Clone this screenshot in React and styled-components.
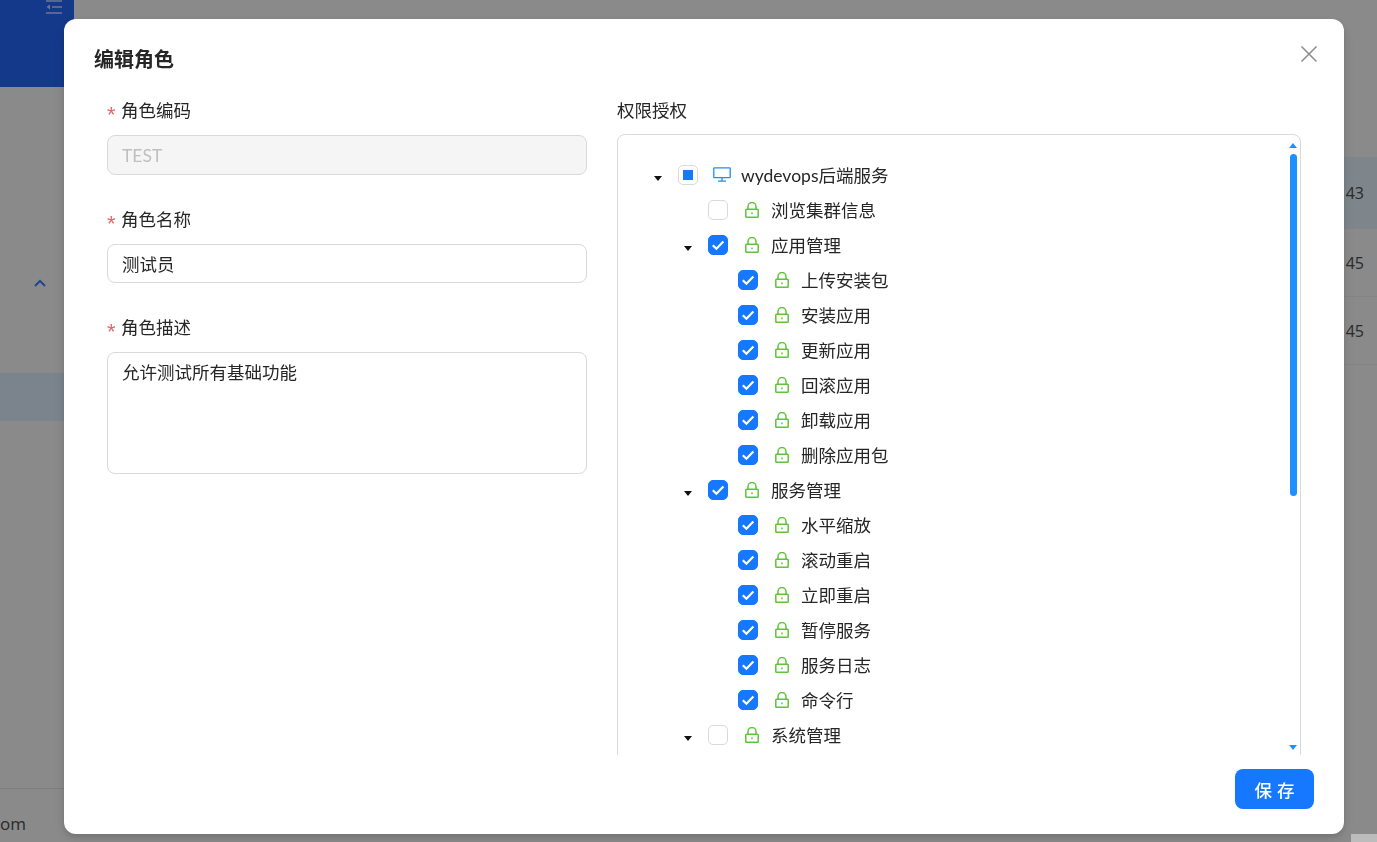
import React from 'react'
import styled, { createGlobalStyle } from 'styled-components'

const FONT = `"Lato", "Noto Sans CJK SC", sans-serif`

const tree = [
  { label: 'wydevops后端服务', depth: 0, caret: true, state: 'half', icon: 'desktop' },
  { label: '浏览集群信息', depth: 1, state: 'off' },
  { label: '应用管理', depth: 1, caret: true, state: 'on' },
  { label: '上传安装包', depth: 2, state: 'on' },
  { label: '安装应用', depth: 2, state: 'on' },
  { label: '更新应用', depth: 2, state: 'on' },
  { label: '回滚应用', depth: 2, state: 'on' },
  { label: '卸载应用', depth: 2, state: 'on' },
  { label: '删除应用包', depth: 2, state: 'on' },
  { label: '服务管理', depth: 1, caret: true, state: 'on' },
  { label: '水平缩放', depth: 2, state: 'on' },
  { label: '滚动重启', depth: 2, state: 'on' },
  { label: '立即重启', depth: 2, state: 'on' },
  { label: '暂停服务', depth: 2, state: 'on' },
  { label: '服务日志', depth: 2, state: 'on' },
  { label: '命令行', depth: 2, state: 'on' },
  { label: '系统管理', depth: 1, caret: true, state: 'off' },
]

const Global = createGlobalStyle`
  html, body {
    margin: 0;
    padding: 0;
    height: 100%;
    overflow: hidden;
    font-family: ${FONT};
    background: #fbfbfb;
  }
  * { box-sizing: border-box; }
`

const Page = styled.div`
  display: flex;
  width: 1377px;
  height: 842px;
  overflow: hidden;
`

const Sidebar = styled.aside`
  width: 74px;
  flex: none;
  display: flex;
  flex-direction: column;
`

const Logo = styled.div`
  height: 87px;
  background: #2568fb;
  display: flex;
  justify-content: flex-end;
  padding-right: 12px;
`

const MenuGroup = styled.div`
  height: 172px;
`

const MenuHead = styled.div`
  height: 48px;
  display: flex;
  align-items: center;
  padding-left: 34px;
`

const MenuItem = styled.div`
  height: 48px;
  margin-top: ${p => p.$gap || 0}px;
  background: ${p => (p.$active ? '#e0efff' : 'transparent')};
`

const SideFoot = styled.div`
  margin-top: auto;
  height: 54px;
  border-top: 1px solid #e4e4e4;
  padding-top: 23px;
  font-family: "Open Sans", sans-serif;
  font-size: 17px;
  line-height: 24px;
  color: #4e4e4e;
`

const Main = styled.main`
  flex: 1;
  padding-top: 157px;
`

const TableRow = styled.div`
  height: ${p => p.$h}px;
  background: ${p => (p.$active ? '#e6f4ff' : 'transparent')};
  border-bottom: 1px solid #f0f0f0;
  display: flex;
  align-items: center;
  justify-content: flex-end;
  padding-right: 13px;
  font-family: "Open Sans", sans-serif;
  font-size: 16px;
  color: #4e4e4e;
`

const Mask = styled.div`
  position: fixed;
  inset: 0;
  background: rgba(0, 0, 0, 0.45);
`

const ScrollStub = styled.div`
  position: fixed;
  left: 1351px;
  top: 834px;
  right: 0;
  bottom: 0;
  background: #bcbcbc;
`

const Modal = styled.div`
  position: fixed;
  left: 64px;
  top: 19px;
  width: 1280px;
  height: 815px;
  background: #fff;
  border-radius: 12px;
  box-shadow: 0 6px 16px rgba(0, 0, 0, 0.08), 0 3px 6px rgba(0, 0, 0, 0.12);
  display: flex;
  flex-direction: column;
`

const ModalHead = styled.div`
  height: 77px;
  padding: 26px 30px 0;
  flex: none;
`

const Title = styled.h2`
  margin: 0;
  font-size: 20px;
  line-height: 28px;
  font-weight: 700;
  color: #262626;
`

const CloseBtn = styled.button`
  position: absolute;
  top: 26px;
  right: 26px;
  width: 18px;
  height: 18px;
  padding: 0;
  border: 0;
  background: none;
  color: #8c8c8c;
  display: flex;
`

const ModalBody = styled.div`
  flex: none;
  height: 659px;
  display: flex;
  padding-left: 43px;
  gap: 30px;
`

const FormCol = styled.div`
  width: 480px;
  flex: none;
`

const Field = styled.div`
  margin-bottom: 30px;
`

const Label = styled.label`
  display: flex;
  align-items: center;
  height: 30px;
  padding-bottom: 3px;
  margin-bottom: ${p => p.$mb || 9}px;
  font-size: 17.5px;
  color: #262626;
  white-space: nowrap;
`

const Star = styled.span`
  width: 14px;
  flex: none;
  margin-top: 10px;
  color: #e2686e;
  font-size: 22px;
  line-height: 22px;
  font-family: "Liberation Sans", sans-serif;
`

const Input = styled.input`
  display: block;
  width: 100%;
  height: ${p => p.$h}px;
  padding: 0 14px;
  border: 1px solid #d9d9d9;
  border-radius: 8px;
  font-family: ${FONT};
  font-size: 17.5px;
  color: #262626;
  outline: none;
  &:disabled {
    background: #f5f5f5;
    color: #bfbfbf;
  }
`

const TextArea = styled.textarea`
  display: block;
  width: 100%;
  height: 122px;
  padding: 6px 14px;
  border: 1px solid #d9d9d9;
  border-radius: 8px;
  font-family: ${FONT};
  font-size: 17.5px;
  line-height: 28px;
  color: #262626;
  outline: none;
  resize: none;
`

const TreeCol = styled.div`
  width: 684px;
  flex: none;
  display: flex;
  flex-direction: column;
`

const TreeClip = styled.div`
  position: relative;
  flex: 1;
  overflow: hidden;
`

const TreeBox = styled.div`
  height: 700px;
  padding: 22px 0 0 30px;
  border: 1px solid #d9d9d9;
  border-radius: 8px;
`

const Row = styled.div`
  display: flex;
  align-items: center;
  height: 35px;
  padding-left: ${p => p.$depth * 30}px;
`

const Switcher = styled.span`
  width: 20px;
  height: 20px;
  flex: none;
  display: flex;
  align-items: center;
  justify-content: center;
  &::after {
    content: '';
    display: ${p => (p.$show ? 'block' : 'none')};
    margin-top: 7px;
    border-left: 4px solid transparent;
    border-right: 4px solid transparent;
    border-top: 5px solid #111;
  }
`

const Check = styled.span`
  width: 20px;
  height: 20px;
  flex: none;
  margin-left: 10px;
  border-radius: 5px;
  border: 1px solid ${p => (p.$state === 'on' ? '#1677ff' : '#d9d9d9')};
  background: ${p => (p.$state === 'on' ? '#1677ff' : '#fff')};
  display: flex;
  align-items: center;
  justify-content: center;
`

const HalfMark = styled.span`
  width: 10px;
  height: 10px;
  background: #1677ff;
`

const IconSlot = styled.span`
  width: 36px;
  margin-left: 6px;
  flex: none;
  display: flex;
  align-items: center;
  justify-content: center;
`

const RowText = styled.span`
  margin-left: 1px;
  font-size: 17.5px;
  color: #262626;
  white-space: nowrap;
`

const ScrollBar = styled.div`
  position: absolute;
  top: 0;
  bottom: 0;
  left: 672px;
  width: 9px;
`

const Arrow = styled.span`
  position: absolute;
  left: 0;
  ${p => (p.$down ? 'bottom: 5px;' : 'top: 9px;')}
  border-left: 4.5px solid transparent;
  border-right: 4.5px solid transparent;
  ${p => (p.$down ? 'border-top' : 'border-bottom')}: 5px solid #1e90ff;
`

const Thumb = styled.span`
  position: absolute;
  left: 1px;
  top: 20px;
  width: 7px;
  height: 342px;
  border-radius: 4px;
  background: #1e90ff;
`

const ModalFoot = styled.div`
  flex: none;
  display: flex;
  justify-content: flex-end;
  padding: 14px 30px 0;
`

const SaveBtn = styled.button`
  width: 79px;
  height: 40px;
  border: 0;
  border-radius: 8px;
  background: #1677ff;
  color: #fff;
  font-family: ${FONT};
  font-size: 17.5px;
  font-weight: 500;
  letter-spacing: 5px;
  padding: 0 0 0 5px;
`

const LockIcon = () => (
  <svg width="14" height="16" viewBox="0 0 14 16" fill="none" stroke="#5fc437" strokeWidth="1.5">
    <rect x="0.8" y="7.2" width="12.4" height="8" rx="0.8" />
    <path d="M3 7V4.5a4 4 0 0 1 8 0V7" />
    <path d="M7 10.5v1.8" />
  </svg>
)

const DesktopIcon = () => (
  <svg width="18" height="15" viewBox="0 0 18 15" fill="none" stroke="#1890ff" strokeWidth="1.3">
    <rect x="0.8" y="0.8" width="16.4" height="9.8" rx="0.6" />
    <path d="M9 10.6v3.4M5 14.2h8" />
  </svg>
)

const CheckMark = () => (
  <svg width="14" height="12" viewBox="0 0 14 12" fill="none" stroke="#fff" strokeWidth="2.2">
    <path d="M1.8 6.2l3.6 3.6L12.4 2.6" />
  </svg>
)

const CloseIcon = () => (
  <svg width="18" height="18" viewBox="0 0 18 18" stroke="currentColor" strokeWidth="1.5">
    <path d="M1.5 1.5l15 15M16.5 1.5l-15 15" />
  </svg>
)

const FoldIcon = () => (
  <svg width="16" height="14" viewBox="0 0 16 14" fill="none" stroke="#c9d8ff" strokeWidth="1.3">
    <path d="M0 1h16M6 7h10M0 13h16" />
    <path d="M4 4.5v5L0.6 7z" fill="#c9d8ff" stroke="none" />
  </svg>
)

const UpChevron = () => (
  <svg width="12" height="8" viewBox="0 0 12 8" fill="none" stroke="#3f7cff" strokeWidth="2">
    <path d="M1 7l5-5 5 5" />
  </svg>
)

const TreeRow = ({ node }) => (
  <Row $depth={node.depth}>
    <Switcher $show={node.caret} />
    <Check $state={node.state}>
      {node.state === 'on' && <CheckMark />}
      {node.state === 'half' && <HalfMark />}
    </Check>
    <IconSlot>{node.icon === 'desktop' ? <DesktopIcon /> : <LockIcon />}</IconSlot>
    <RowText>{node.label}</RowText>
  </Row>
)

export default function App() {
  return (
    <>
      <Global />
      <Page>
        <Sidebar>
          <Logo>
            <FoldIcon />
          </Logo>
          <MenuGroup />
          <MenuHead>
            <UpChevron />
          </MenuHead>
          <MenuItem $gap={66} $active />
          <SideFoot>om</SideFoot>
        </Sidebar>
        <Main>
          <TableRow $h={72} $active>43</TableRow>
          <TableRow $h={68}>45</TableRow>
          <TableRow $h={68}>45</TableRow>
        </Main>
      </Page>
      <Mask />
      <ScrollStub />
      <Modal>
        <ModalHead>
          <Title>编辑角色</Title>
        </ModalHead>
        <CloseBtn aria-label="关闭">
          <CloseIcon />
        </CloseBtn>
        <ModalBody>
          <FormCol>
            <Field>
              <Label><Star>*</Star>角色编码</Label>
              <Input $h={40} value="TEST" disabled readOnly />
            </Field>
            <Field>
              <Label><Star>*</Star>角色名称</Label>
              <Input $h={39} value="测试员" readOnly />
            </Field>
            <Field>
              <Label><Star>*</Star>角色描述</Label>
              <TextArea value="允许测试所有基础功能" readOnly />
            </Field>
          </FormCol>
          <TreeCol>
            <Label $mb={8}>权限授权</Label>
            <TreeClip>
              <TreeBox>
                {tree.map(node => (
                  <TreeRow key={node.label} node={node} />
                ))}
              </TreeBox>
              <ScrollBar>
                <Arrow />
                <Thumb />
                <Arrow $down />
              </ScrollBar>
            </TreeClip>
          </TreeCol>
        </ModalBody>
        <ModalFoot>
          <SaveBtn>保存</SaveBtn>
        </ModalFoot>
      </Modal>
    </>
  )
}
